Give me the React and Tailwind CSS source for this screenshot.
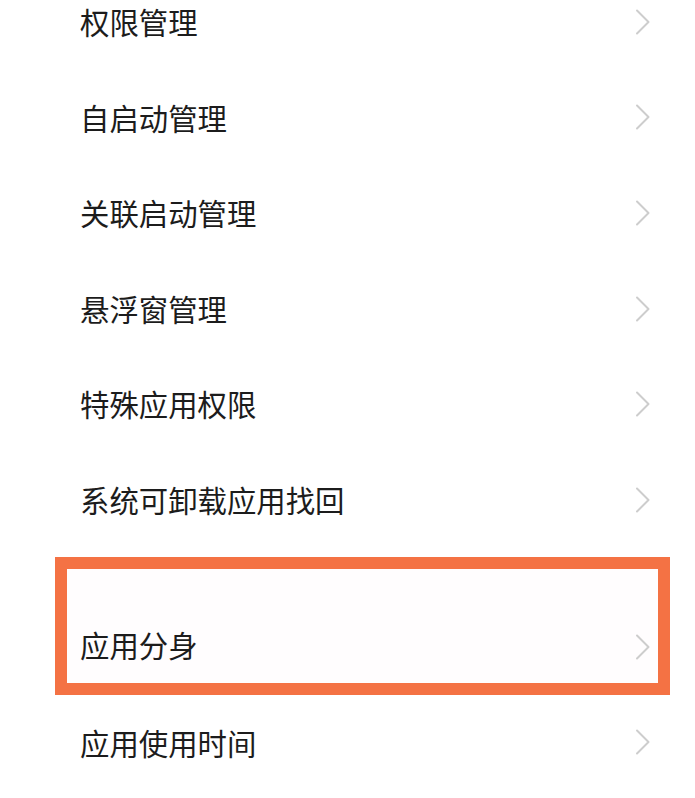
const items = ["权限管理", "自启动管理", "关联启动管理", "悬浮窗管理", "特殊应用权限", "系统可卸载应用找回"];

function Chevron() {
  return (
    <svg width="16" height="26" viewBox="0 0 16 26" className="shrink-0">
      <path d="M2 1.5 L13.5 13 L2 24.5" fill="none" stroke="#cdcdcd" strokeWidth="2" strokeLinecap="round" strokeLinejoin="round" />
    </svg>
  );
}

function Row({ label }) {
  return (
    <div className="flex h-[95.6px] items-center justify-between pl-[80px] pr-[44px]">
      <span className="text-[29.4px] leading-none text-[#1c1c1c]">{label}</span>
      <Chevron />
    </div>
  );
}

export default function App() {
  return (
    <div
      className="h-[798px] w-[695px] overflow-hidden bg-white"
      style={{ fontFamily: '"Noto Sans CJK SC", "Noto Sans", sans-serif' }}
    >
      <div className="-mt-[26px]">
        {items.map((t) => (
          <Row key={t} label={t} />
        ))}
        <div className="mx-[55px] mt-[9px] mr-[25px] border-[12px] border-[#f47244] bg-[#fffdfe]">
          <div className="flex h-[114px] items-end justify-between pb-[23px] pl-[13px] pr-[7px]">
            <span className="text-[29.4px] leading-none text-[#1c1c1c]">应用分身</span>
            <Chevron />
          </div>
        </div>
        <Row label="应用使用时间" />
      </div>
    </div>
  );
}
